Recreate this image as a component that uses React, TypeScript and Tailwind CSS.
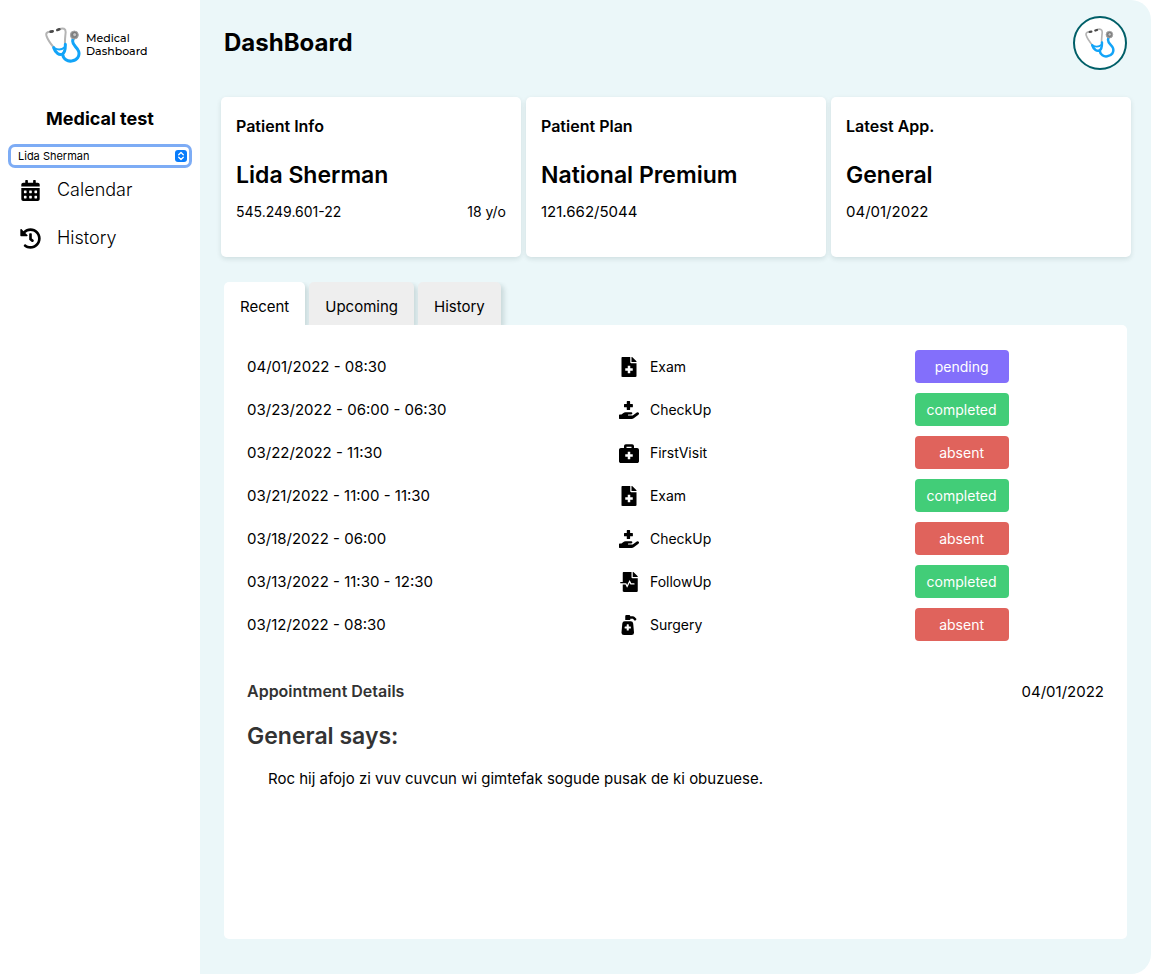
import { useState } from "react";
import type { ReactNode } from "react";
import type { IconType } from "react-icons";
import {
  FaBriefcaseMedical,
  FaCalendarAlt,
  FaFileMedical,
  FaFileMedicalAlt,
  FaHandHoldingMedical,
  FaHistory,
  FaPumpMedical,
} from "react-icons/fa";

type Status = "pending" | "completed" | "absent";

const statusColors: Record<Status, string> = {
  pending: "bg-[#836ffb]",
  completed: "bg-[#42cd78]",
  absent: "bg-[#e0635c]",
};

const kinds: Record<string, IconType> = {
  Exam: FaFileMedical,
  CheckUp: FaHandHoldingMedical,
  FirstVisit: FaBriefcaseMedical,
  FollowUp: FaFileMedicalAlt,
  Surgery: FaPumpMedical,
};

const appointments: { date: string; kind: string; status: Status }[] = [
  { date: "04/01/2022 - 08:30", kind: "Exam", status: "pending" },
  { date: "03/23/2022 - 06:00 - 06:30", kind: "CheckUp", status: "completed" },
  { date: "03/22/2022 - 11:30", kind: "FirstVisit", status: "absent" },
  { date: "03/21/2022 - 11:00 - 11:30", kind: "Exam", status: "completed" },
  { date: "03/18/2022 - 06:00", kind: "CheckUp", status: "absent" },
  { date: "03/13/2022 - 11:30 - 12:30", kind: "FollowUp", status: "completed" },
  { date: "03/12/2022 - 08:30", kind: "Surgery", status: "absent" },
];

function Stethoscope({ className }: { className: string }) {
  return (
    <svg viewBox="0 0 106 108" className={className} fill="none" aria-hidden="true">
      <g stroke="#b4b4b4" strokeWidth="6" strokeLinecap="round">
        <path d="M14 14C3 15 1 20 4 28C8 40 16 50 25 61" />
        <path d="M42 6C54 2 61 5 61 15C60 29 58 39 59 51" />
      </g>
      <g stroke="#4a4a4a" strokeWidth="8" strokeLinecap="round">
        <path d="M16 14L22 13" />
        <path d="M36 9L42 7" />
      </g>
      <g stroke="#12a4f8" strokeWidth="9" strokeLinecap="round" strokeLinejoin="round">
        <path d="M25 62C31 79 42 85 51 81C61 76 60 64 60 52" />
        <path d="M27 63C39 70 50 68 59 60" strokeWidth="6" />
        <path d="M52 82C54 97 67 104 79 102C96 100 104 87 100 73C96 60 81 56 82 42C82 38 84 34 86 31" />
      </g>
      <circle cx="87" cy="24" r="12" fill="#858585" stroke="#a6a6a6" strokeWidth="3" />
      <circle cx="88" cy="23" r="6" fill="#c4c4c4" stroke="#666" strokeWidth="2" />
    </svg>
  );
}

function Card({ label, title, children }: { label: string; title: string; children: ReactNode }) {
  return (
    <section className="h-40 flex-1 rounded-[5px] bg-white px-[15px] pt-[17px] shadow-[0_2px_5px_rgba(0,50,50,0.12)]">
      <h3 className="text-base leading-6 font-semibold">{label}</h3>
      <h2 className="mt-[21px] text-[23px] leading-8 font-semibold">{title}</h2>
      <div className="mt-[9px] flex justify-between text-[15px] leading-6">{children}</div>
    </section>
  );
}

export default function App() {
  const [tab, setTab] = useState("Recent");
  return (
    <div className="flex min-h-screen bg-white font-[Inter,sans-serif] text-black">
      <aside className="w-[200px] shrink-0">
        <div className="flex h-[90px] items-center gap-[5px] pl-[45px]">
          <Stethoscope className="h-9 w-9" />
          <p className="font-[Montserrat,Inter,sans-serif] text-[11px] leading-[13px] font-medium">
            Medical
            <br />
            Dashboard
          </p>
        </div>
        <h2 className="mt-[17px] text-center text-lg leading-6 font-bold">Medical test</h2>
        <div className="relative mx-[11px] mt-4 h-[18px]">
          <select
            aria-label="Patient"
            className="block h-[18px] w-full appearance-none rounded-[4px] bg-white pl-[7px] text-[11px] leading-[18px] ring-3 ring-[#7dacf5] outline-none"
          >
            <option>Lida Sherman</option>
          </select>
          <svg viewBox="0 0 12 12" className="pointer-events-none absolute top-[3px] right-[2px] h-3 w-3" aria-hidden="true">
            <rect width="12" height="12" rx="3" fill="#087cfb" />
            <path d="M3.7 4.8L6 2.5L8.3 4.8M3.7 7.2L6 9.5L8.3 7.2" fill="none" stroke="white" strokeWidth="1.3" strokeLinecap="round" strokeLinejoin="round" />
          </svg>
        </div>
        <nav className="flex flex-col pt-[1px] text-lg font-light">
          <a href="#calendar" className="flex h-12 items-center gap-4 pl-5">
            <FaCalendarAlt className="h-[21px] w-[21px]" />
            Calendar
          </a>
          <a href="#history" className="flex h-12 items-center gap-4 pl-5">
            <FaHistory className="h-[21px] w-[21px]" />
            History
          </a>
        </nav>
      </aside>

      <main className="flex min-w-0 flex-1 flex-col rounded-r-[20px] bg-[#ebf7f9] px-6 pb-[35px]">
        <header className="flex h-[86px] items-center justify-between">
          <h1 className="text-2xl leading-8 font-bold">DashBoard</h1>
          <div className="flex h-[54px] w-[54px] items-center justify-center rounded-full border-2 border-[#005f68] bg-white">
            <Stethoscope className="h-[30px] w-[30px]" />
          </div>
        </header>

        <div className="mt-[11px] -mr-1 -ml-[3px] flex gap-[5px]">
          <Card label="Patient Info" title="Lida Sherman">
            <span className="text-sm leading-6">545.249.601-22</span>
            <span className="text-sm leading-6">18 y/o</span>
          </Card>
          <Card label="Patient Plan" title="National Premium">
            121.662/5044
          </Card>
          <Card label="Latest App." title="General">
            04/01/2022
          </Card>
        </div>

        <div className="mt-[25px] flex gap-1 overflow-hidden pr-2" role="tablist">
          {["Recent", "Upcoming", "History"].map((name) => (
            <button
              key={name}
              role="tab"
              aria-selected={tab === name}
              onClick={() => setTab(name)}
              className={`h-[43px] rounded-t-[5px] px-4 pt-[7px] text-[15px] shadow-[3px_3px_5px_rgba(0,50,50,0.15)] ${
                tab === name ? "bg-white" : "bg-[#eeeeee]"
              }`}
            >
              {name}
            </button>
          ))}
        </div>

        <section className="flex-1 rounded-r-[5px] rounded-bl-[5px] bg-white px-[23px] pt-5">
          <table className="w-full table-fixed text-left">
            <colgroup>
              <col className="w-[43.4%]" />
              <col className="w-[34.5%]" />
              <col />
            </colgroup>
            <tbody>
              {appointments.map(({ date, kind, status }) => {
                const Icon = kinds[kind];
                return (
                  <tr key={date} className="h-[43px]">
                    <td className="text-[15px] leading-6">{date}</td>
                    <td>
                      <div className="flex items-center gap-[11px] text-sm">
                        <Icon className="h-5 w-5" />
                        {kind}
                      </div>
                    </td>
                    <td>
                      <span className={`block h-[33px] w-[94px] rounded-[4px] text-center text-sm leading-[34px] text-white ${statusColors[status]}`}>
                        {status}
                      </span>
                    </td>
                  </tr>
                );
              })}
            </tbody>
          </table>
          <div className="mt-[33px] flex items-baseline justify-between leading-6">
            <h3 className="font-semibold text-[#333]">Appointment Details</h3>
            <span className="text-[15px]">04/01/2022</span>
          </div>
          <h2 className="mt-4 text-[23px] leading-8 font-semibold text-[#333]">General says:</h2>
          <p className="mt-[15px] pl-[21px] text-[15px] leading-6">Roc hij afojo zi vuv cuvcun wi gimtefak sogude pusak de ki obuzuese.</p>
        </section>
      </main>
    </div>
  );
}
